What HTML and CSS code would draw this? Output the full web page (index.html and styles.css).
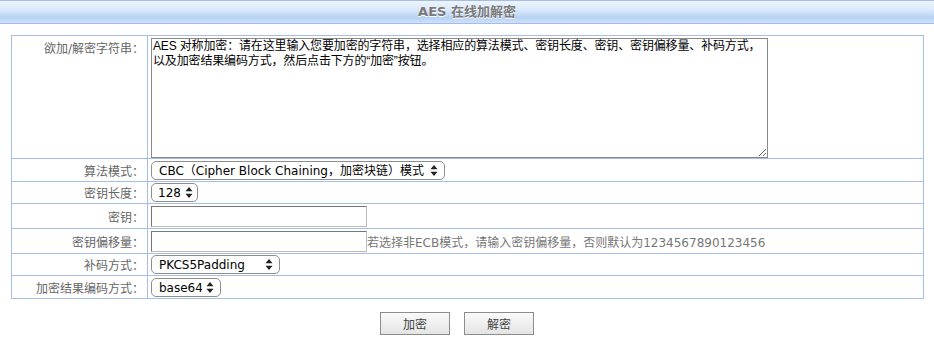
FILE: index.html
```html
<!DOCTYPE html>
<html lang="zh-CN">
<head>
    <meta charset="UTF-8">
    <title>AES 在线加解密</title>
    <link rel="stylesheet" href="styles.css">
</head>
<body>
    <div class="title-bar">AES 在线加解密</div>

    <table class="form-table">
        <tr class="text-row">
            <td class="label">欲加/解密字符串：</td>
            <td class="field"><textarea class="content" id="content">AES 对称加密：请在这里输入您要加密的字符串，选择相应的算法模式、密钥长度、密钥、密钥偏移量、补码方式，以及加密结果编码方式，然后点击下方的“加密”按钮。</textarea></td>
        </tr>
        <tr>
            <td class="label">算法模式：</td>
            <td class="field">
                <select class="sel sel-mode">
                    <option>CBC（Cipher Block Chaining，加密块链）模式</option>
                    <option>ECB（Electronic Code Book，电子密码本）模式</option>
                </select>
            </td>
        </tr>
        <tr class="tight">
            <td class="label">密钥长度：</td>
            <td class="field">
                <select class="sel sel-len">
                    <option>128</option>
                    <option>192</option>
                    <option>256</option>
                </select>
            </td>
        </tr>
        <tr>
            <td class="label">密钥：</td>
            <td class="field"><div class="line"><input type="text" class="txt"></div></td>
        </tr>
        <tr>
            <td class="label">密钥偏移量：</td>
            <td class="field">
                <div class="line">
                    <input type="text" class="txt">
                    <span class="hint">若选择非ECB模式，请输入密钥偏移量，否则默认为1234567890123456</span>
                </div>
            </td>
        </tr>
        <tr class="tight">
            <td class="label">补码方式：</td>
            <td class="field">
                <select class="sel sel-pad">
                    <option>PKCS5Padding</option>
                    <option>NoPadding</option>
                </select>
            </td>
        </tr>
        <tr>
            <td class="label">加密结果编码方式：</td>
            <td class="field">
                <select class="sel sel-enc">
                    <option>base64</option>
                    <option>hex</option>
                </select>
            </td>
        </tr>
    </table>

    <div class="buttons">
        <button class="btn">加密</button>
        <button class="btn">解密</button>
    </div>
</body>
</html>
```

FILE: styles.css
```css
body {
    margin: 0;
    padding: 0;
    background-color: #ffffff;
    font-family: "DejaVu Sans", "Noto Sans CJK SC", sans-serif;
    font-size: 12px;
    color: #333333;
}
.title-bar {
    height: 22px;
    line-height: 22px;
    border-top: 1px solid #a3bde8;
    border-bottom: 1px solid #a3bde8;
    background: linear-gradient(#eef5fd, #dbe9fb 40%, #b7d2f4 75%, #cfe1f8);
    text-align: center;
    font-weight: bold;
    font-size: 13px;
    color: #7a7a7a;
    text-shadow: 0 1px 0 #ffffff;
}
.form-table {
    margin: 11px 0 0 11px;
    width: 913px;
    border-collapse: collapse;
}
.form-table td {
    border: 1px solid #a4bde9;
    padding: 2px 3px 1px;
}
.form-table .tight td {
    padding-top: 1px;
}
.label {
    width: 129px;
    text-align: right;
    color: #666666;
    vertical-align: middle;
    white-space: nowrap;
}
.text-row .label {
    vertical-align: top;
    padding-top: 3px;
}
.text-row .field {
    padding-bottom: 0;
}
.content {
    display: block;
    box-sizing: border-box;
    width: 617px;
    height: 120px;
    margin: 0;
    padding: 0 1px;
    border: 1px solid #8a8a8a;
    font-family: "Liberation Sans", "Noto Sans CJK SC", sans-serif;
    font-size: 12px;
    letter-spacing: -0.15px;
    line-height: 15px;
    color: #000000;
    resize: both;
}
.sel {
    -webkit-appearance: none;
    appearance: none;
    display: block;
    box-sizing: border-box;
    height: 19px;
    margin: 0;
    padding: 0 18px 0 7px;
    border: 1px solid #8e8e8e;
    border-radius: 5px;
    background: #ffffff url("data:image/svg+xml;utf8,<svg xmlns='http://www.w3.org/2000/svg' width='8' height='11'><path d='M4 0L7.5 4.2H0.5z M4 11L7.5 6.8H0.5z' fill='%23222'/></svg>") no-repeat right 6px center;
    font-family: "DejaVu Sans", "Noto Sans CJK SC", sans-serif;
    font-size: 12px;
    color: #000000;
}
.sel-mode {
    width: 294px;
}
.sel-len {
    width: 47px;
    padding: 0 15px 0 6px;
    background-position: right 4px center;
}
.sel-pad {
    width: 129px;
}
.sel-enc {
    width: 70px;
}
.line {
    display: flex;
    align-items: center;
}
.txt {
    box-sizing: border-box;
    width: 216px;
    height: 21px;
    margin: 0;
    padding: 1px 2px;
    border: 1px solid #777777;
    border-right-color: #bbbbbb;
    border-bottom-color: #bbbbbb;
}
.hint {
    color: #777777;
    white-space: nowrap;
}
.buttons {
    display: flex;
    justify-content: center;
    gap: 14px;
    margin-top: 13px;
    padding-right: 20px;
}
.btn {
    width: 70px;
    height: 23px;
    padding: 0;
    border: 1px solid #8c8c8c;
    background: linear-gradient(#fafafa, #e4e4e4);
    font-family: "Noto Sans CJK SC", sans-serif;
    font-size: 12px;
    color: #444444;
    cursor: pointer;
}
```
